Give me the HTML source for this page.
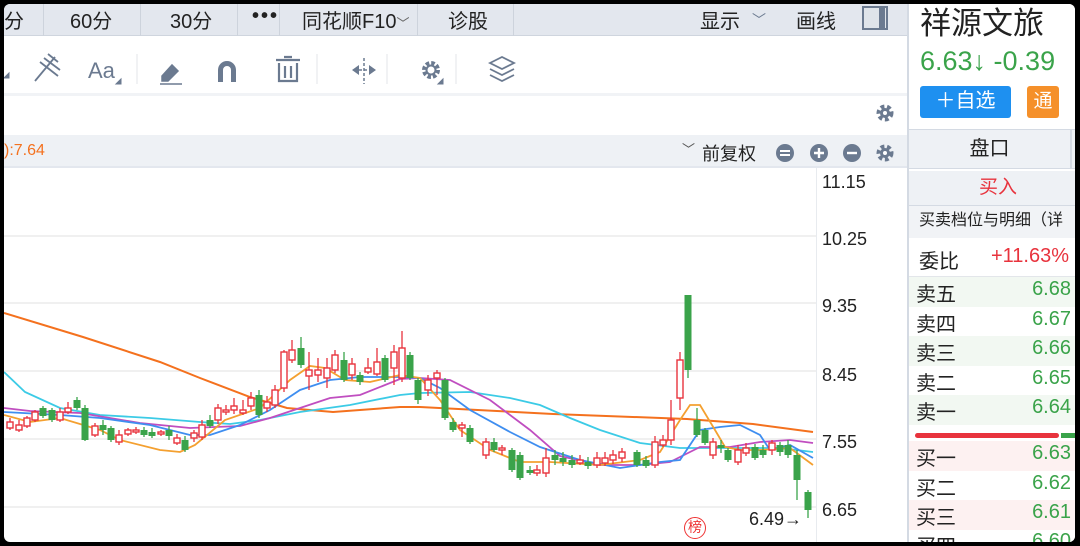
<!DOCTYPE html>
<html><head><meta charset="utf-8"><style>
*{margin:0;padding:0;box-sizing:border-box}
body{width:1080px;height:546px;background:#000;overflow:hidden;font-family:"Liberation Sans","Noto Sans CJK SC",sans-serif;position:relative}
.frame{position:absolute;left:4px;top:4px;width:1071px;height:538px;background:#fff;border-radius:6px;overflow:hidden}
.abs{position:absolute}
.hdr{left:0;top:0;width:903px;height:32px;background:#e3e7ee;border-bottom:1px solid #cfd5de}
.hdr span{position:absolute;top:1px;font-size:20px;color:#222}
.sep{position:absolute;top:0;width:1px;height:32px;background:#cdd3dc}
.tb{left:0;top:32px;width:903px;height:60px;background:#fff;border-bottom:3px solid #f1f3f6}
.bar{left:0;top:131px;width:903px;height:33px;background:#eef1f5;border-bottom:2px solid #e3e7ee}
.ic{fill:#6b7a90;stroke:#6b7a90}
.rp{left:903px;top:0;width:168px;height:538px;border-left:2px solid #d4dae3;background:#fff}
.row{position:absolute;left:0;width:168px;height:30px;font-size:20px}
.row .l{position:absolute;left:7px;top:1px;color:#222}
.row .r{position:absolute;right:6px;top:1px;color:#3aa34a}
</style></head><body><div class="frame">
<div class="abs hdr">
<span style="left:0">分</span><div class="sep" style="left:39px"></div>
<span style="left:66px">60分</span><div class="sep" style="left:136px"></div>
<span style="left:166px">30分</span><div class="sep" style="left:233px"></div>
<span style="left:248px;letter-spacing:2px;font-weight:bold">•••</span><div class="sep" style="left:275px"></div>
<span style="left:298px">同花顺F10<small style="font-size:13px;color:#666">﹀</small></span><div class="sep" style="left:413px"></div>
<span style="left:444px">诊股</span><div class="sep" style="left:509px"></div>
<span style="left:696px">显示</span><span style="left:748px;font-size:14px;color:#6b7a90;top:6px">﹀</span>
<span style="left:792px">画线</span>
<div class="abs" style="left:858px;top:2px;width:26px;height:24px;border:2px solid #6b7a90;background:#dfe4ea"><div style="position:absolute;right:1px;top:0;width:6px;height:20px;background:#6b7a90"></div></div>
</div>
<div class="abs tb">
<svg width="903" height="60" style="position:absolute;left:0;top:0">
<path d="M0 42l5-5v5z" class="ic"/>
<g fill="none" stroke="#6b7a90" stroke-width="1.8"><path d="M31 45l20-24M36 26l18 14M40 22l16 12M44 18l10 8"/></g>
<text x="84" y="42" font-size="22" fill="#6b7a90" font-family="Liberation Sans">Aa</text><path d="M112 48l5-5v5z" class="ic"/>
<line x1="133" y1="18" x2="133" y2="48" stroke="#e3e6ea"/>
<path d="M158 40l10-11 6 6-10 10h-6zM156 48h22" fill="#6b7a90" stroke="#6b7a90" stroke-width="1.5"/>
<path d="M214 46V34a9 9 0 0 1 18 0v12h-5V34a4 4 0 0 0-8 0v12z" fill="#6b7a90"/>
<g fill="none" stroke="#6b7a90" stroke-width="2.2"><path d="M272 24h24M280 21h8M275 27v18h18V27M281 30v12M287 30v12"/></g>
<line x1="313" y1="18" x2="313" y2="48" stroke="#e3e6ea"/>
<path d="M348 34l7-5v10zM372 34l-7-5v10z" fill="#6b7a90"/><path d="M355 34h10M360 22v26" stroke="#6b7a90" stroke-width="1.5" stroke-dasharray="3 2" fill="none"/>
<line x1="383" y1="18" x2="383" y2="48" stroke="#e3e6ea"/>
<circle cx="427" cy="34" r="7" fill="none" stroke="#6b7a90" stroke-width="4" stroke-dasharray="3.5 2"/><circle cx="427" cy="34" r="4.5" fill="none" stroke="#6b7a90" stroke-width="2"/>
<path d="M434 48l5-5v5z" class="ic"/>
<line x1="452" y1="18" x2="452" y2="48" stroke="#e3e6ea"/>
<g fill="none" stroke="#6b7a90" stroke-width="1.8"><path d="M486 27l12-6 12 6-12 6zM486 33l12 6 12-6M486 39l12 6 12-6"/></g>
</svg></div>
<svg class="abs" style="left:871px;top:99px" width="20" height="20"><circle cx="10" cy="10" r="6" fill="none" stroke="#6b7a90" stroke-width="5" stroke-dasharray="3.5 2.5"/><circle cx="10" cy="10" r="5" fill="#6b7a90"/><circle cx="10" cy="10" r="2" fill="#fff"/></svg>
<div class="abs bar"><span style="position:absolute;left:0;top:7px;font-size:16px;color:#f4711e">):7.64</span>
<span style="position:absolute;left:678px;top:4px;font-size:13px;color:#555">﹀</span>
<span style="position:absolute;left:698px;top:5px;font-size:18px;color:#222">前复权</span>
<svg style="position:absolute;left:770px;top:7px" width="120" height="22">
<circle cx="11" cy="11" r="9" fill="#6b7a90"/><path d="M6 9h10M6 13h10" stroke="#fff" stroke-width="2"/>
<circle cx="45" cy="11" r="9" fill="#6b7a90"/><path d="M40 11h10M45 6v10" stroke="#fff" stroke-width="2.4"/>
<circle cx="78" cy="11" r="9" fill="#6b7a90"/><path d="M73 11h10" stroke="#fff" stroke-width="2.4"/>
<circle cx="111" cy="11" r="6" fill="none" stroke="#6b7a90" stroke-width="5" stroke-dasharray="3.5 2.5"/><circle cx="111" cy="11" r="5" fill="#6b7a90"/><circle cx="111" cy="11" r="2" fill="#fff"/>
</svg></div>
<svg id="ch" class="abs" style="left:0;top:0" width="903" height="538"></svg>
<div class="abs" style="left:812px;top:164px;width:1px;height:374px;background:#e8ebef"></div>
<div class="abs" style="left:814px;top:164px;font-size:18px;color:#222;line-height:20px">
<div class="abs" style="top:4px;left:4px">11.15</div><div class="abs" style="top:61px;left:4px">10.25</div>
<div class="abs" style="top:128px;left:4px">9.35</div><div class="abs" style="top:197px;left:4px">8.45</div>
<div class="abs" style="top:264px;left:4px">7.55</div><div class="abs" style="top:332px;left:4px">6.65</div></div>
<div class="abs" style="left:745px;top:505px;font-size:18px;color:#222">6.49→</div>
<div class="abs" style="left:680px;top:513px;width:22px;height:22px;border:1.5px solid #e33;border-radius:50%;color:#e33;font-size:14px;text-align:center;line-height:19px">榜</div>
<div class="abs rp">
<div class="abs" style="left:11px;top:-6px;font-size:31px;color:#222">祥源文旅</div>
<div class="abs" style="left:11px;top:42px;font-size:27px;color:#3aa34a;white-space:nowrap">6.63↓ -0.39</div>
<div class="abs" style="left:11px;top:82px;width:91px;height:32px;background:#1e90f0;border-radius:3px;color:#fff;font-size:20px;text-align:center;line-height:31px">＋自选</div>
<div class="abs" style="left:118px;top:82px;width:32px;height:32px;background:#f5902a;border-radius:3px;color:#fff;font-size:19px;text-align:center;line-height:31px">通</div>
<div class="abs" style="left:0;top:125px;width:168px;height:40px;background:#eef1f5;border-top:1px solid #d4dae3;border-bottom:1px solid #d4dae3"><div class="abs" style="left:0;width:163px;height:38px;border-right:2px solid #d4dae3;text-align:center;font-size:20px;line-height:38px;color:#222">盘口</div></div>
<div class="abs" style="left:0;top:167px;width:168px;height:35px;background:#eef1f5;border-bottom:1px solid #d4dae3;text-align:center;padding-left:10px;font-size:19px;line-height:34px;color:#e8333d">买入</div>
<div class="abs" style="left:0;top:202px;width:168px;height:32px;background:#f1f3f6;font-size:16px;line-height:30px;padding-left:10px;color:#222;white-space:nowrap">买卖档位与明细（详</div>
<div class="row" style="top:237px;height:36px;border-bottom:1px solid #e3e6ea"><span class="l" style="left:10px;top:4px">委比</span><span class="r" style="color:#e8333d;top:4px;right:8px">+11.63%</span></div>
<div class="row" style="top:273px;background:#f2f8f2"><span class="l">卖五</span><span class="r">6.68</span></div>
<div class="row" style="top:303px"><span class="l">卖四</span><span class="r">6.67</span></div>
<div class="row" style="top:332px;background:#f2f8f2"><span class="l">卖三</span><span class="r">6.66</span></div>
<div class="row" style="top:362px"><span class="l">卖二</span><span class="r">6.65</span></div>
<div class="row" style="top:391px;background:#f2f8f2"><span class="l">卖一</span><span class="r">6.64</span></div>
<div class="abs" style="left:6px;top:429px;width:144px;height:5px;background:#e8333d;border-radius:3px"></div>
<div class="abs" style="left:152px;top:429px;width:20px;height:5px;background:#3aa34a"></div>
<div class="row" style="top:437px;background:#fdf1f1"><span class="l">买一</span><span class="r">6.63</span></div>
<div class="row" style="top:467px"><span class="l">买二</span><span class="r">6.62</span></div>
<div class="row" style="top:496px;background:#fdf1f1"><span class="l">买三</span><span class="r">6.61</span></div>
<div class="row" style="top:525px"><span class="l">买四</span><span class="r">6.60</span></div>
</div>
</div>
<script>
var s='',ox=-4,oy=-4;
[236,303,371,439,507].forEach(function(y){s+='<line x1="0" x2="812" y1="'+(y+oy)+'" y2="'+(y+oy)+'" stroke="#ececec" stroke-width="1.5"/>';});
function pl(c,w,p){s+='<polyline fill="none" stroke="'+c+'" stroke-width="'+w+'" points="'+p.map(function(q){return (q[0]+ox)+','+(q[1]+oy)}).join(' ')+'"/>';}
pl('#f4711e',2,[[4,313],[83,337],[160,362],[200,378],[250,397],[287,408],[333,412],[400,407],[420,407],[553,414],[687,419],[753,424],[813,432]]);
pl('#3ccbe6',1.8,[[4,372],[25,392],[60,408],[100,415],[150,418],[200,422],[230,424],[260,420],[300,412],[350,405],[400,395],[420,393],[470,392],[510,398],[540,405],[570,418],[600,430],[640,443],[680,448],[720,448],[780,448],[813,452]]);
pl('#c04ec0',1.8,[[4,408],[30,411],[80,413],[140,423],[190,428],[240,426],[270,418],[300,408],[330,398],[360,395],[400,379],[420,378],[450,380],[490,400],[530,430],[560,456],[600,465],[640,465],[670,462],[700,447],[730,447],[760,442],[790,440],[813,443]]);
pl('#3f8ef0',1.8,[[4,412],[60,415],[100,418],[150,425],[190,435],[210,435],[240,425],[270,410],[300,390],[330,380],[360,377],[400,377],[420,378],[440,388],[470,410],[510,432],[540,447],[580,460],[620,468],[660,462],[680,460],[700,430],[720,427],[740,425],[760,435],[770,450],[790,445],[813,458]]);
pl('#f4a030',1.8,[[4,415],[30,422],[60,418],[100,430],[120,440],[160,450],[180,452],[195,445],[225,420],[260,408],[290,380],[310,366],[325,368],[345,380],[370,382],[400,375],[420,378],[440,400],[460,430],[490,450],[520,462],[550,462],[600,465],[640,460],[660,452],[680,420],[690,405],[700,405],[715,430],[725,447],[740,450],[760,450],[790,448],[813,465]]);
var C=[[10,422,428,1,418,430],[19,425,430,1,420,432],[27,418,426,1,416,428],[35,412,420,1,410,422],[43,408,416,0,406,418],[52,410,420,0,408,422],[60,412,420,1,408,422],[68,408,412,1,402,414],[77,400,408,0,397,410],[85,408,440,0,405,441],[95,426,435,1,423,437],[103,425,430,0,420,435],[111,428,440,0,426,442],[119,435,442,1,430,445],[128,430,434,1,428,436],[136,430,432,1,427,434],[144,430,435,0,427,437],[152,432,436,0,428,438],[161,432,434,1,430,436],[169,430,436,0,426,440],[177,438,443,1,434,445],[185,440,450,0,436,452],[194,433,438,1,430,442],[202,425,437,1,420,440],[210,420,426,0,415,428],[218,408,420,1,404,424],[226,410,412,1,405,415],[234,406,410,1,398,414],[243,410,413,1,400,415],[251,398,406,1,392,410],[259,395,415,0,390,418],[267,402,408,1,396,412],[275,390,405,1,385,408],[284,352,388,1,350,392],[292,350,360,1,340,363],[301,348,365,0,337,368],[309,370,376,1,352,390],[318,370,375,1,358,382],[327,368,378,1,358,388],[335,355,370,1,350,373],[344,360,380,0,352,382],[352,364,375,1,358,380],[360,375,382,0,372,385],[368,368,372,1,358,374],[377,362,374,1,348,376],[385,358,380,0,355,382],[394,352,368,1,345,385],[402,348,378,1,331,382],[410,355,378,0,352,380],[418,380,400,0,378,404],[428,380,390,1,375,396],[437,373,378,1,370,395],[445,380,418,0,378,420],[453,422,430,0,418,432],[462,425,428,1,422,437],[470,428,442,0,425,444],[486,442,455,1,438,459],[494,442,450,0,438,452],[502,448,450,1,445,455],[512,450,470,0,448,472],[520,455,478,0,452,480],[530,470,473,0,466,475],[537,470,473,1,465,476],[546,458,473,1,448,477],[555,455,460,0,450,465],[563,458,462,0,452,466],[572,460,465,0,455,468],[580,460,463,1,455,465],[588,462,466,0,457,469],[597,458,465,1,452,468],[605,458,463,1,452,466],[613,455,460,1,450,464],[622,452,458,1,448,462],[637,452,465,0,450,467],[646,460,466,0,456,468],[655,442,465,1,436,468],[663,440,445,1,435,447],[671,420,440,1,400,445],[680,360,398,1,352,410],[688,295,370,0,295,378],[697,420,435,0,408,437],[705,430,443,0,428,445],[713,442,455,1,438,459],[721,445,448,0,440,453],[728,450,460,0,448,462],[738,450,462,1,445,465],[746,448,453,1,443,456],[755,447,458,0,444,460],[763,450,455,0,445,458],[772,443,450,1,440,455],[780,445,452,0,442,456],[788,445,455,0,440,458],[797,455,480,0,450,500],[808,492,510,0,490,518]];
C.forEach(function(c){var col=c[3]?'#e8333d':'#3aa34a',x=c[0]+ox;
s+='<line x1="'+x+'" x2="'+x+'" y1="'+(c[4]+oy)+'" y2="'+(c[5]+oy)+'" stroke="'+col+'" stroke-width="1.3"/>';
var h=Math.max(c[2]-c[1],1.5);
if(c[3])s+='<rect x="'+(x-3)+'" y="'+(c[1]+oy)+'" width="6" height="'+h+'" fill="#fff" stroke="'+col+'" stroke-width="1.4"/>';
else s+='<rect x="'+(x-3.5)+'" y="'+(c[1]+oy)+'" width="7" height="'+h+'" fill="'+col+'"/>';});
document.getElementById('ch').innerHTML=s;
</script>
</body></html>
